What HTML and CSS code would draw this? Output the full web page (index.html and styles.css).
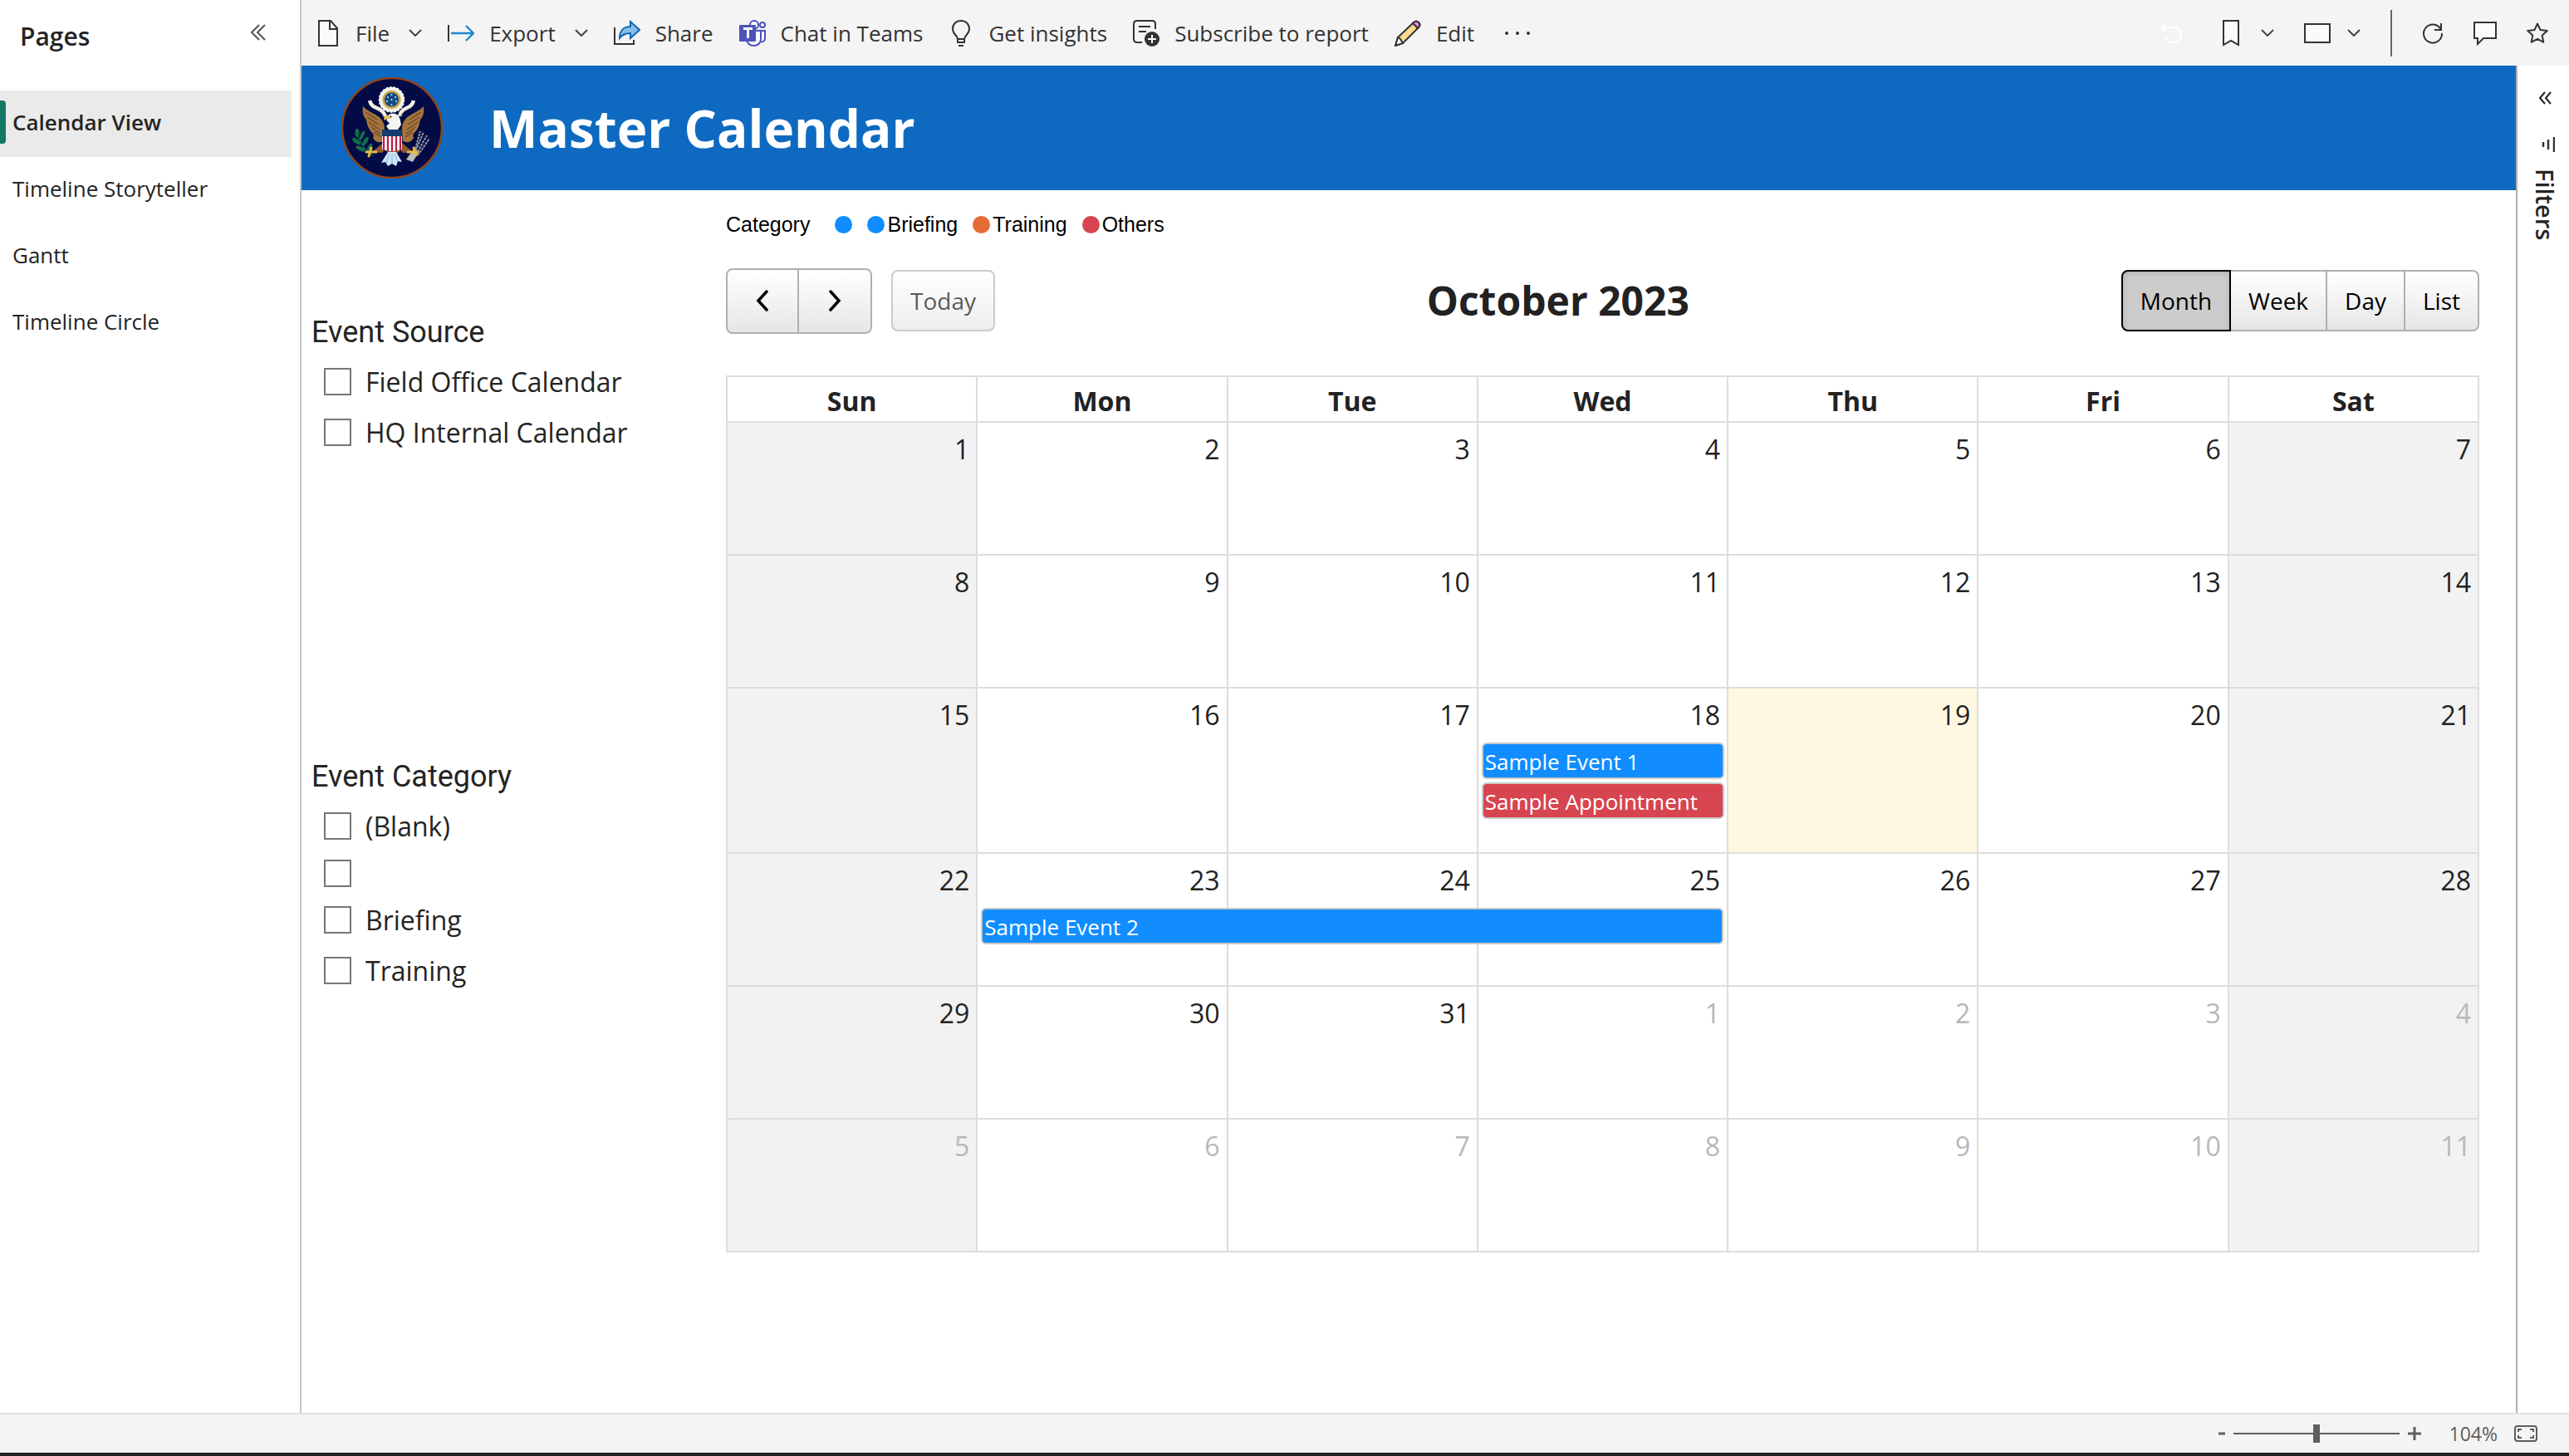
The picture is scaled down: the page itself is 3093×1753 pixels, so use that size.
FILE: index.html
```html
<!DOCTYPE html>
<html lang="en">
<head>
<meta charset="utf-8">
<meta name="viewport" content="width=device-width, initial-scale=1">
<title>Master Calendar</title>
<link rel="stylesheet" href="styles.css">
</head>
<body>
<div class="workspace">
  <nav class="pages" aria-label="Pages">
    <div class="pages-head">
      <h2 class="pages-title">Pages</h2>
      <button class="icon-btn" aria-label="Collapse pages"><svg width="18" height="20" viewBox="0 0 18 20"><path d="M10 1 1 10l9 9M17 1 8 10l9 9" fill="none" stroke="#555" stroke-width="2"/></svg></button>
    </div>
    <a class="page-link current" href="#calendar" aria-current="page">Calendar View</a>
    <a class="page-link" href="#storyteller">Timeline Storyteller</a>
    <a class="page-link" href="#gantt">Gantt</a>
    <a class="page-link" href="#circle">Timeline Circle</a>
  </nav>

  <div class="report">
    <header class="toolbar">
      <button class="tool"><svg class="i-file" width="24" height="32" viewBox="0 0 24 32"><path d="M1 1h14l8 9v21H1z" fill="#fafafa" stroke="#333" stroke-width="2"/><path d="M14 1v10h9" fill="none" stroke="#333" stroke-width="2"/></svg><span>File</span><svg class="chev" width="16" height="9" viewBox="0 0 16 9"><path d="m1 1 7 7 7-7" fill="none" stroke="#444" stroke-width="2"/></svg></button>
      <button class="tool"><svg width="32" height="20" viewBox="0 0 32 20"><path d="M1 0v20" stroke="#333" stroke-width="2"/><path d="M4 10h26M22 1l9 9-9 9" fill="none" stroke="#1c87cf" stroke-width="2.400"/></svg><span>Export</span><svg class="chev" width="16" height="9" viewBox="0 0 16 9"><path d="m1 1 7 7 7-7" fill="none" stroke="#444" stroke-width="2"/></svg></button>
      <button class="tool"><svg width="32" height="32" viewBox="0 0 32 32"><path d="M1 9v20h23v-5" fill="none" stroke="#333" stroke-width="2"/><path d="M20 2l11 10-11 10v-6c-6 0-10 2-13 6 0-9 5-14 13-14z" fill="#83beec" stroke="#0f66b0" stroke-width="2"/></svg><span>Share</span></button>
      <button class="tool"><svg width="32" height="32" viewBox="0 0 32 32"><g fill="#fff" stroke="#4b53bc" stroke-width="2"><circle cx="28" cy="6" r="3"/><circle cx="18" cy="6" r="5"/><path d="M25 13h6v9c0 3-2 5-6 4z"/><path d="M9 13h17v10c0 5-4 8-8.500 8S9 28 9 23z"/></g><rect y="6" width="20" height="20" rx="1" fill="#4b53bc"/><path d="M5 10.500h11M10.500 10.500V22" stroke="#fff" stroke-width="3"/></svg><span>Chat in Teams</span></button>
      <button class="tool"><svg class="i-bulb" width="22" height="32" viewBox="0 0 22 32"><path d="M7 27v-4c0-4-6-6-6-12C1 5 5 1 11 1s10 4 10 10c0 6-6 8-6 12v4zM7 23h8M8 31h6" fill="none" stroke="#333" stroke-width="2"/></svg><span>Get insights</span></button>
      <button class="tool"><svg width="32" height="32" viewBox="0 0 32 32"><path d="M11 27H5c-2 0-4-1-4-4V5c0-2 1-4 4-4h18c3 0 4 2 4 4v6M7 8h14M7 14h9" fill="none" stroke="#333" stroke-width="2"/><circle cx="23" cy="23" r="9" fill="#333"/><path d="M23 18v10M18 23h10" stroke="#fff" stroke-width="2"/></svg><span>Subscribe to report</span></button>
      <button class="tool"><svg width="32" height="32" viewBox="0 0 32 32"><path d="M1 31l3-10L23 3c2-2 4-2 6 0s2 4 0 6L10 28z" fill="#ffd98a" stroke="#333" stroke-width="2"/><path d="M22 4c3-3 5-3 7-1s2 4-1 7z" fill="#d58bd8" stroke="#333" stroke-width="2"/><path d="M1 31l3-10 3 2 3 5z" fill="#fff" stroke="#333" stroke-width="2"/></svg><span>Edit</span></button>
      <button class="icon-btn more" aria-label="More options"><svg width="30" height="4" viewBox="0 0 30 4" fill="#333"><circle cx="2" cy="2" r="2"/><circle cx="15" cy="2" r="2"/><circle cx="28" cy="2" r="2"/></svg></button>
      <div class="tools-right">
        <button class="icon-btn" aria-label="Reset"><svg width="26" height="26" viewBox="0 0 26 26"><path d="M1 6h13c6 0 10 4 10 9s-4 9-9.500 9S6 20 6 16M6 1 1 6l5 5" fill="none" stroke="#fff" stroke-width="2"/></svg></button>
        <button class="split" aria-label="Bookmarks"><svg width="20" height="32" viewBox="0 0 20 32"><path d="M1 1h18v29l-9-5-9 5z" fill="#fafafa" stroke="#333" stroke-width="2"/></svg><svg width="16" height="9" viewBox="0 0 16 9"><path d="m1 1 7 7 7-7" fill="none" stroke="#444" stroke-width="2"/></svg></button>
        <button class="split view" aria-label="View"><svg width="32" height="24" viewBox="0 0 32 24"><rect x="1" y="1" width="30" height="22" fill="#fafafa" stroke="#333" stroke-width="2"/></svg><svg width="16" height="9" viewBox="0 0 16 9"><path d="m1 1 7 7 7-7" fill="none" stroke="#444" stroke-width="2"/></svg></button>
        <span class="divider"></span>
        <button class="icon-btn" aria-label="Refresh"><svg width="26" height="26" viewBox="0 0 26 26"><path d="M22.500 8A11 11 0 1 0 24 13M23 1v8h-8" fill="none" stroke="#333" stroke-width="2"/></svg></button>
        <button class="icon-btn" aria-label="Comment"><svg width="28" height="30" viewBox="0 0 28 30"><path d="M1 2h26v19H12l-7 7v-7H1z" fill="#fafafa" stroke="#333" stroke-width="2"/></svg></button>
        <button class="icon-btn" aria-label="Favorite"><svg width="26" height="26" viewBox="0 0 26 26"><path d="m13 1.500 3.500 7.500 8.300 1-6.100 5.600 1.600 8.200-7.300-4-7.300 4 1.600-8.200L1.200 10l8.300-1z" fill="none" stroke="#333" stroke-width="2" stroke-linejoin="round"/></svg></button>
      </div>
    </header>

    <div class="stage">
      <main class="canvas">
        <div class="banner">
          <svg class="seal" width="122" height="122" viewBox="0 0 122 122" role="img" aria-label="Great Seal">
            <circle cx="61" cy="61" r="60" fill="#020b45" stroke="#8c4420" stroke-width="2.500"/>
            <g>
              <path d="M26 35c4 4 8 6 13 9 8 4 13 9 13 18l-1 15c-4 2-10 2-13-4 1-2 1-4 0-5-5-5-7-10-8-17-4-4-5-10-4-16z" fill="#a5743e"/>
              <path d="M29 42l14 9M31 48l14 9M33 54l13 9M36 60l11 8M39 66l9 6" stroke="#6c4723" stroke-width="1.200"/>
            </g>
            <g transform="matrix(-1 0 0 1 121 0)">
              <path d="M22 35c4 4 8 6 13 9 8 4 13 9 13 18l-1 15c-4 2-10 2-13-4 1-2 1-4 0-5-5-5-7-10-8-17-4-4-5-10-4-16z" fill="#a5743e"/>
              <path d="M25 42l14 9M27 48l14 9M29 54l13 9M32 60l11 8M35 66l9 6" stroke="#6c4723" stroke-width="1.200"/>
            </g>
            <path d="M51 78l-14 12 12 1 7-8zM72 78l14 12-12 1-7-8z" fill="#8b5a30"/>
            <path d="M53 88h18l-4 4H57z" fill="#8b5a30"/>
            <path d="M56 90h10l7 12-5-1-2 6-5-3-5 3-3-5-5 1z" fill="#cfe6f8"/>
            <path d="M58 92l-4 11M61 92v12M64 92l4 10" stroke="#7faed6" stroke-width="1"/>
            <path d="M34 28c3 12 14 6 19 19M87 28c-3 12-14 6-17 19" fill="none" stroke="#f1eee6" stroke-width="4.500"/>
            <path d="M37 37c6 3 11 4 14 10M84 37c-6 3-10 4-13 10" fill="none" stroke="#5c5a58" stroke-width="1" stroke-dasharray="1.500 1.500"/>
            <path d="M55 53c-1-7 4-11 10-9 6 2 6 9 7 13l-4 6H57l-3-4 4-4z" fill="#f4f4f2"/>
            <path d="M58 46c-5-1-8 2-6 6l3-2h5z" fill="#efc454"/>
            <circle cx="59.500" cy="47.500" r="1" fill="#222"/>
            <path d="M49 70h24v17c-3 1-8 1-12 3-4-2-9-2-12-3z" fill="#fff"/>
            <path d="M51 71v17M56 71v18M61 71v19M66 71v18M71 71v17" stroke="#bf1c45" stroke-width="2.300"/>
            <path d="M49 63h24v8H49z" fill="#113c6d"/>
            <circle cx="60.500" cy="27" r="15" fill="#f5f1df" stroke="#fff" stroke-width="1.500" stroke-dasharray="3 1.500"/>
            <circle cx="60.500" cy="27" r="11" fill="#c7a64a"/>
            <circle cx="60.500" cy="27" r="8.500" fill="#124a82"/>
            <g fill="#d9e8f5"><circle cx="60.500" cy="21" r="1"/><circle cx="56" cy="24" r="1"/><circle cx="65" cy="24" r="1"/><circle cx="60.500" cy="27" r="1"/><circle cx="55" cy="29" r="1"/><circle cx="66" cy="29" r="1"/><circle cx="60.500" cy="33" r="1"/></g>
            <path d="M18 62c2 14 8 24 20 33" fill="none" stroke="#0f6b45" stroke-width="1.500"/>
            <g fill="#11704a"><ellipse cx="19" cy="67" rx="2.500" ry="5"/><ellipse cx="25" cy="70" rx="2" ry="6" transform="rotate(25 25 70)"/><ellipse cx="18" cy="77" rx="2.500" ry="6" transform="rotate(-50 18 77)"/><ellipse cx="29" cy="77" rx="2.500" ry="6" transform="rotate(30 29 77)"/><ellipse cx="23" cy="86" rx="2.500" ry="6" transform="rotate(-65 23 86)"/><ellipse cx="34" cy="84" rx="2" ry="5" transform="rotate(30 34 84)"/></g>
            <path d="M88 92l11-26M90 93l13-23M92 94l14-20M88 90l7-25" stroke="#9b9ca5" stroke-width="2" stroke-dasharray="3 1"/>
            <path d="M86 88l6 4-6 10-8-3z" fill="#bdbcba"/>
            <path d="M30 90h12M36 85l-3 10M80 90h12M87 85l3 9" stroke="#e7b84d" stroke-width="3" stroke-linecap="round"/>
          </svg>
          <h1 class="banner-title">Master Calendar</h1>
        </div>

        <div class="body">
          <div class="slicers">
            <fieldset class="slicer">
              <legend>Event Source</legend>
              <label class="option"><input type="checkbox"><span>Field Office Calendar</span></label>
              <label class="option"><input type="checkbox"><span>HQ Internal Calendar</span></label>
            </fieldset>
            <fieldset class="slicer">
              <legend>Event Category</legend>
              <label class="option"><input type="checkbox"><span>(Blank)</span></label>
              <label class="option empty"><input type="checkbox" aria-label="Empty"></label>
              <label class="option"><input type="checkbox"><span>Briefing</span></label>
              <label class="option"><input type="checkbox"><span>Training</span></label>
            </fieldset>
          </div>

          <section class="calendar">
            <ul class="legend">
              <li class="legend-name">Category</li>
              <li class="key blue"></li>
              <li class="key blue">Briefing</li>
              <li class="key orange">Training</li>
              <li class="key red">Others</li>
            </ul>
            <div class="cal-bar">
              <div class="cal-left">
                <div class="group nav">
                  <button aria-label="Previous"><svg width="16" height="26" viewBox="0 0 16 26"><path d="M13 2 3 13l10 11" fill="none" stroke="#000" stroke-width="3.500" stroke-linecap="round"/></svg></button><button aria-label="Next"><svg width="16" height="26" viewBox="0 0 16 26"><path d="m3 2 10 11L3 24" fill="none" stroke="#000" stroke-width="3.500" stroke-linecap="round"/></svg></button>
                </div>
                <div class="group"><button disabled>Today</button></div>
              </div>
              <h2 class="cal-title">October 2023</h2>
              <div class="group views">
                <button class="active" aria-pressed="true">Month</button><button>Week</button><button>Day</button><button>List</button>
              </div>
            </div>
            <table class="month">
              <thead><tr><th>Sun</th><th>Mon</th><th>Tue</th><th>Wed</th><th>Thu</th><th>Fri</th><th>Sat</th></tr></thead>
              <tbody>
                <tr><td>1</td><td>2</td><td>3</td><td>4</td><td>5</td><td>6</td><td>7</td></tr>
                <tr><td>8</td><td>9</td><td>10</td><td>11</td><td>12</td><td>13</td><td>14</td></tr>
                <tr><td>15</td><td>16</td><td>17</td><td>18<a class="event blue" href="#event-1">Sample Event 1</a><a class="event red" href="#appointment">Sample Appointment</a></td><td class="today">19</td><td>20</td><td>21</td></tr>
                <tr><td>22</td><td>23<a class="event blue span-3" href="#event-2">Sample Event 2</a></td><td>24</td><td>25</td><td>26</td><td>27</td><td>28</td></tr>
                <tr><td>29</td><td>30</td><td>31</td><td class="other">1</td><td class="other">2</td><td class="other">3</td><td class="other">4</td></tr>
                <tr><td class="other">5</td><td class="other">6</td><td class="other">7</td><td class="other">8</td><td class="other">9</td><td class="other">10</td><td class="other">11</td></tr>
              </tbody>
            </table>
          </section>
        </div>
      </main>

      <aside class="filters">
        <button class="icon-btn" aria-label="Expand filters"><svg width="16" height="16" viewBox="0 0 16 16"><path d="M8 1 2 8l6 7M15 1 9 8l6 7" fill="none" stroke="#222" stroke-width="2"/></svg></button>
        <svg class="filter-icon" width="16" height="18" viewBox="0 0 16 18"><path d="M15 0v18M8 3v12M2 6v6" stroke="#333" stroke-width="2.500"/></svg>
        <span class="filters-title">Filters</span>
      </aside>
    </div>
  </div>
</div>

<footer class="status">
  <button class="zoom-btn" aria-label="Zoom out"><svg width="8" height="16" viewBox="0 0 8 16"><path d="M0 8h8" stroke="#605e5c" stroke-width="3"/></svg></button>
  <input class="zoom" type="range" min="0" max="100" value="50" aria-label="Zoom">
  <button class="zoom-btn" aria-label="Zoom in"><svg width="16" height="16" viewBox="0 0 16 16"><path d="M0 8h16M8 0v16" stroke="#605e5c" stroke-width="3"/></svg></button>
  <span class="percent">104%</span>
  <button class="icon-btn fit" aria-label="Fit to page"><svg width="28" height="20" viewBox="0 0 28 20"><rect x="1" y="1" width="26" height="18" rx="3" fill="none" stroke="#605e5c" stroke-width="2"/><path d="M9 5H5v3M5 12v3h4M19 5h4v3M23 12v3h-4" fill="none" stroke="#605e5c" stroke-width="2"/></svg></button>
</footer>
</body>
</html>
```
FILE: styles.css
```css
* { box-sizing: border-box; }

body {
  margin: 0;
  min-height: 100vh;
  display: flex;
  flex-direction: column;
  background: #fff;
  color: #252423;
  font-family: "Open Sans", "Noto Sans", sans-serif;
  font-size: 26px;
}

button {
  padding: 0;
  border: 0;
  background: none;
  color: inherit;
  font: inherit;
}

a { color: inherit; text-decoration: none; }
svg { display: block; flex: none; }
h1, h2, ul { margin: 0; padding: 0; }

.workspace { flex: 1; display: flex; }

/* Page list */
.pages {
  flex: none;
  width: 363px;
  border-right: 2px solid #c8c6c4;
}
.pages-head {
  display: flex;
  justify-content: space-between;
  align-items: flex-start;
  height: 109px;
  padding: 24px 41px 0 24px;
}
.pages-title { font-size: 30px; line-height: 40px; font-weight: 600; }
.pages-head .icon-btn { padding-top: 5px; }
.page-link {
  display: flex;
  align-items: center;
  height: 80px;
  margin-right: 10px;
  padding: 0 0 4px 15px;
}
.page-link.current {
  position: relative;
  background: #eaeaea;
  font-weight: 600;
}
.page-link.current::before {
  content: "";
  position: absolute;
  left: 0;
  top: 12px;
  width: 7px;
  height: 52px;
  border-radius: 0 4px 4px 0;
  background: #117865;
}

/* Toolbar */
.report { flex: 1; min-width: 0; display: flex; flex-direction: column; }
.toolbar {
  display: flex;
  align-items: center;
  height: 79px;
  padding: 0 25px 0 20px;
  background: #f4f4f4;
  color: #333;
}
.tool {
  display: flex;
  align-items: center;
  gap: 18px;
  margin-right: 31px;
  white-space: nowrap;
}
.tool .i-file { margin-right: 3px; }
.tool .i-bulb { margin: 0 4px; }
.tool .chev { margin-left: 5px; }
.more { margin-left: 6px; }
.tools-right { display: flex; align-items: center; gap: 36px; margin-left: auto; }
.split { display: flex; align-items: center; gap: 26px; margin-left: 12px; }
.split.view { gap: 20px; margin-left: 0; }
.divider { width: 2px; height: 56px; background: #666; }

/* Report canvas */
.stage { flex: 1; display: flex; }
.canvas { flex: 1; min-width: 0; }
.banner {
  display: flex;
  align-items: center;
  gap: 56px;
  height: 150px;
  padding-left: 48px;
  background: #0e6ac0;
  color: #fff;
}
.banner-title { font-size: 62px; line-height: 80px; font-weight: 700; }
.body { display: flex; padding-right: 44px; }

/* Slicers */
.slicers { flex: none; width: 511px; padding: 149px 0 0 12px; }
.slicer { margin: 0 0 362px; padding: 0; border: 0; }
.slicer legend {
  padding: 0;
  margin-bottom: 7px;
  font: 400 36px/44px Roboto, sans-serif;
}
.option {
  display: flex;
  align-items: center;
  gap: 17px;
  height: 61px;
  padding-left: 15px;
  font-size: 32px;
}
.option.empty { height: 52px; }
.option input {
  appearance: none;
  width: 33px;
  height: 33px;
  margin: 0;
  border: 2px solid #767676;
  background: #fff;
}

/* Calendar */
.calendar { flex: 1; min-width: 0; }
.legend {
  display: flex;
  align-items: center;
  height: 82px;
  gap: 18px;
  list-style: none;
  color: #000;
  font: 25px/32px "Liberation Sans", Arial, sans-serif;
}
.legend-name { margin-right: 12px; }
.key { display: flex; align-items: center; gap: 3px; }
.key::before {
  content: "";
  width: 21px;
  height: 21px;
  border-radius: 50%;
  background: currentColor;
}
.key.blue::before, .event.blue { background: #118dff; }
.key.orange::before { background: #e66c37; }
.key.red::before, .event.red { background: #d64550; }

.cal-bar {
  display: flex;
  align-items: center;
  justify-content: space-between;
  height: 102px;
}
.cal-left { display: flex; align-items: center; gap: 23px; }
.cal-title { font-size: 48px; line-height: 64px; font-weight: 700; color: #222; }
.group { display: flex; }
.group button {
  height: 74px;
  padding: 0 21px;
  border: 2px solid #b0b0b0;
  border-left-width: 0;
  background: linear-gradient(#fff, #e6e6e6);
  color: #000;
  font-size: 28px;
}
.group button:first-child { border-left-width: 2px; border-radius: 8px 0 0 8px; }
.group button:last-child { border-radius: 0 8px 8px 0; }
.group button:only-child { border-radius: 8px; }
.group button:disabled { opacity: 0.65; }
.group button.active {
  border: 2px solid #000;
  background: #ccc;
  box-shadow: inset 0 2px 6px rgba(0, 0, 0, 0.15);
}
.group.nav button {
  display: flex;
  align-items: center;
  justify-content: center;
  width: 88px;
  height: 79px;
}

.month {
  width: 100%;
  margin-top: 39px;
  border-collapse: collapse;
  table-layout: fixed;
  color: #222;
  font-size: 32px;
}
.month th, .month td { border: 2px solid #ddd; }
.month th { height: 55px; padding: 4px 0 0; line-height: 48px; }
.month td {
  position: relative;
  height: 160px;
  padding: 10px 8px 40px 5px;
  line-height: 44px;
  text-align: right;
  vertical-align: top;
}
.month td:first-child, .month td:last-child { background: #f2f2f2; }
.month td.today { background: #fff8e1; }
.month td.other { color: #b8b8b8; }

.event {
  display: block;
  height: 44px;
  margin: 11px -5px 0 -1px;
  padding: 0 2px;
  border: 2px solid #c8c8c8;
  border-radius: 6px;
  color: #fff;
  font-size: 26px;
  line-height: 42px;
  text-align: left;
  white-space: nowrap;
}
.event + .event { margin-top: 4px; }
.event.span-3 {
  position: absolute;
  left: 5px;
  z-index: 1;
  width: calc(300% - 4px);
}

/* Filters pane */
.filters {
  flex: none;
  display: flex;
  flex-direction: column;
  align-items: center;
  width: 64px;
  padding: 31px 0 0 4px;
  border-left: 2px solid #b3b0ad;
}
.filter-icon { margin: 39px 0 20px 8px; }
.filters-title {
  writing-mode: vertical-rl;
  font-size: 29px;
  line-height: 40px;
  font-weight: 600;
}

/* Status bar */
.status {
  display: flex;
  align-items: center;
  justify-content: flex-end;
  height: 52px;
  padding-right: 38px;
  border-top: 2px solid #e0e0e0;
  border-bottom: 4px solid #222;
  background: #f4f4f4;
  color: #605e5c;
  font-size: 23px;
}
.zoom {
  appearance: none;
  width: 200px;
  height: 22px;
  margin: 0 10px;
  background: linear-gradient(#605e5c, #605e5c) center / 100% 2px no-repeat;
}
.zoom::-webkit-slider-thumb {
  appearance: none;
  width: 8px;
  height: 22px;
  background: #605e5c;
}
.percent { margin: 0 20px 0 34px; }
```
